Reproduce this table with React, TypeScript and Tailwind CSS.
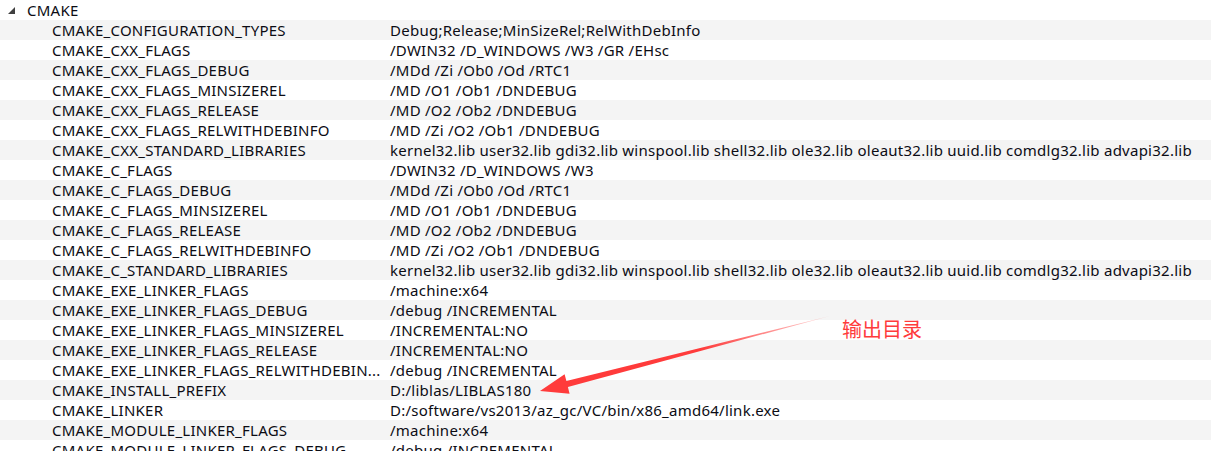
const ROWS: [string, string][] = [
  ['CMAKE_CONFIGURATION_TYPES', 'Debug;Release;MinSizeRel;RelWithDebInfo'],
  ['CMAKE_CXX_FLAGS', '/DWIN32 /D_WINDOWS /W3 /GR /EHsc'],
  ['CMAKE_CXX_FLAGS_DEBUG', '/MDd /Zi /Ob0 /Od /RTC1'],
  ['CMAKE_CXX_FLAGS_MINSIZEREL', '/MD /O1 /Ob1 /DNDEBUG'],
  ['CMAKE_CXX_FLAGS_RELEASE', '/MD /O2 /Ob2 /DNDEBUG'],
  ['CMAKE_CXX_FLAGS_RELWITHDEBINFO', '/MD /Zi /O2 /Ob1 /DNDEBUG'],
  [
    'CMAKE_CXX_STANDARD_LIBRARIES',
    'kernel32.lib user32.lib gdi32.lib winspool.lib shell32.lib ole32.lib oleaut32.lib uuid.lib comdlg32.lib advapi32.lib',
  ],
  ['CMAKE_C_FLAGS', '/DWIN32 /D_WINDOWS /W3'],
  ['CMAKE_C_FLAGS_DEBUG', '/MDd /Zi /Ob0 /Od /RTC1'],
  ['CMAKE_C_FLAGS_MINSIZEREL', '/MD /O1 /Ob1 /DNDEBUG'],
  ['CMAKE_C_FLAGS_RELEASE', '/MD /O2 /Ob2 /DNDEBUG'],
  ['CMAKE_C_FLAGS_RELWITHDEBINFO', '/MD /Zi /O2 /Ob1 /DNDEBUG'],
  [
    'CMAKE_C_STANDARD_LIBRARIES',
    'kernel32.lib user32.lib gdi32.lib winspool.lib shell32.lib ole32.lib oleaut32.lib uuid.lib comdlg32.lib advapi32.lib',
  ],
  ['CMAKE_EXE_LINKER_FLAGS', '/machine:x64'],
  ['CMAKE_EXE_LINKER_FLAGS_DEBUG', '/debug /INCREMENTAL'],
  ['CMAKE_EXE_LINKER_FLAGS_MINSIZEREL', '/INCREMENTAL:NO'],
  ['CMAKE_EXE_LINKER_FLAGS_RELEASE', '/INCREMENTAL:NO'],
  ['CMAKE_EXE_LINKER_FLAGS_RELWITHDEBIN...', '/debug /INCREMENTAL'],
  ['CMAKE_INSTALL_PREFIX', 'D:/liblas/LIBLAS180'],
  ['CMAKE_LINKER', 'D:/software/vs2013/az_gc/VC/bin/x86_amd64/link.exe'],
  ['CMAKE_MODULE_LINKER_FLAGS', '/machine:x64'],
  ['CMAKE_MODULE_LINKER_FLAGS_DEBUG', '/debug /INCREMENTAL'],
];

// annotation arrow pointing at the install prefix row
function Arrow() {
  return (
    <svg className="pointer-events-none absolute left-0 top-0" width={1211} height={451} viewBox="0 0 1211 451">
      <defs>
        <linearGradient id="tail" x1="830" y1="316" x2="700" y2="350" gradientUnits="userSpaceOnUse">
          <stop offset="0" stopColor="#ff3b3b" stopOpacity="0.2" />
          <stop offset="1" stopColor="#ff3b3b" stopOpacity="1" />
        </linearGradient>
      </defs>
      <polygon points="830,316 567.9,386.9 569.6,393.7 540,391 564.6,374.3 566.4,381.1" fill="url(#tail)" />
    </svg>
  );
}

export default function App() {
  return (
    <div
      className="relative h-[451px] w-[1211px] overflow-hidden bg-white text-[15px] tracking-[0.25px] text-[#0c0c14]"
      style={{ fontFamily: '"Noto Sans", "Noto Sans CJK SC", sans-serif' }}
    >
      <div className="flex h-5 items-center">
        <svg className="ml-[8px]" width="7" height="7" viewBox="0 0 7 7">
          <polygon points="7,0 7,7 0,7" fill="#404040" />
        </svg>
        <span className="ml-[12px] leading-5">CMAKE</span>
      </div>
      {ROWS.map(([name, value], i) => (
        <div key={name} className={`flex h-5 items-center leading-5 ${i % 2 === 0 ? 'bg-[#f4f4f4]' : 'bg-white'}`}>
          <div className="w-[390px] shrink-0 overflow-hidden whitespace-nowrap pl-[52px]">{name}</div>
          <div className="whitespace-nowrap">{value}</div>
        </div>
      ))}
      <Arrow />
      <span className="absolute left-[842px] top-[318px] text-[20px] leading-6 tracking-normal text-[#ff3b3b]">输出目录</span>
    </div>
  );
}
